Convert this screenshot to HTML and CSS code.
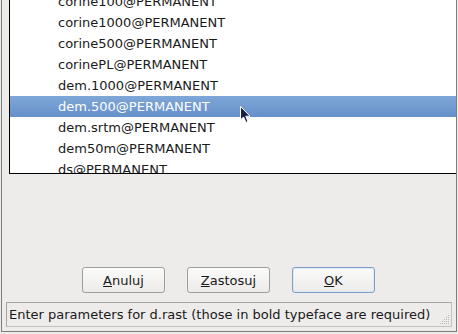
FILE: index.html
```html
<!DOCTYPE html>
<html lang="en">
<head>
    <meta charset="UTF-8">
    <title>d.rast</title>
    <link rel="stylesheet" href="styles.css">
</head>
<body>
    <div class="window">
        <div class="list-box">
            <ul class="map-list">
                <li>corine100@PERMANENT</li>
                <li>corine1000@PERMANENT</li>
                <li>corine500@PERMANENT</li>
                <li>corinePL@PERMANENT</li>
                <li>dem.1000@PERMANENT</li>
                <li class="selected">dem.500@PERMANENT</li>
                <li>dem.srtm@PERMANENT</li>
                <li>dem50m@PERMANENT</li>
                <li>ds@PERMANENT</li>
            </ul>
        </div>
        <div class="buttons">
            <button class="btn"><u>A</u>nuluj</button>
            <button class="btn"><u>Z</u>astosuj</button>
            <button class="btn default"><u>O</u>K</button>
        </div>
        <div class="statusbar">
            <span>Enter parameters for d.rast (those in bold typeface are required)</span>
            <svg class="grip" width="12" height="12" viewBox="0 0 12 12">
                <g fill="#b9b7b3">
                    <rect x="10" y="2" width="1" height="1"/>
                    <rect x="8" y="4" width="1" height="1"/><rect x="10" y="4" width="1" height="1"/>
                    <rect x="6" y="6" width="1" height="1"/><rect x="8" y="6" width="1" height="1"/><rect x="10" y="6" width="1" height="1"/>
                    <rect x="4" y="8" width="1" height="1"/><rect x="6" y="8" width="1" height="1"/><rect x="8" y="8" width="1" height="1"/><rect x="10" y="8" width="1" height="1"/>
                    <rect x="2" y="10" width="1" height="1"/><rect x="4" y="10" width="1" height="1"/><rect x="6" y="10" width="1" height="1"/><rect x="8" y="10" width="1" height="1"/><rect x="10" y="10" width="1" height="1"/>
                </g>
            </svg>
        </div>
    </div>
    <!-- mouse pointer over the list -->
    <svg class="cursor" width="14" height="20" viewBox="0 0 14 20">
        <path d="M1.5 1.5 L1.5 15 L4.5 12 L7 17.5 L9 16.5 L6.8 11.2 L11 11.2 Z" fill="#1a1f4a" stroke="#ffffff" stroke-width="1"/>
    </svg>
</body>
</html>
```
FILE: styles.css
```css
body {
    margin: 0;
    padding: 0;
    width: 458px;
    height: 334px;
    overflow: hidden;
    background-color: #edeceb;
    font-family: "DejaVu Sans", sans-serif;
    font-size: 13px;
    color: #1a1a1a;
    position: relative;
}
.window {
    margin-left: 1px;
    width: 454px;
    height: 331px;
    border: 1px solid #7d7c7a;
    border-top: none;
    display: flex;
    flex-direction: column;
}
.list-box {
    margin-left: 7px;
    height: 173px;
    border-left: 1px solid #000;
    border-bottom: 1px solid #000;
    background-color: #fff;
    overflow: hidden;
}
.map-list {
    list-style: none;
    margin: -9px 0 0 0;
    padding: 0;
}
.map-list li {
    height: 21px;
    line-height: 21px;
    padding-left: 48px;
    white-space: nowrap;
}
.map-list li.selected {
    background: linear-gradient(#7fa7d7, #6590c9);
    color: #fff;
}
.buttons {
    display: flex;
    gap: 22px;
    padding-left: 80px;
    margin-top: 93px;
}
.btn {
    width: 83px;
    height: 26px;
    padding: 0;
    font-family: "DejaVu Sans", sans-serif;
    font-size: 13px;
    color: #1a1a1a;
    background: linear-gradient(#fbfbfa, #ecebe9);
    border: 1px solid #a09e9b;
    border-radius: 3px;
}
.btn.default {
    border-color: #7d9fc8;
    box-shadow: inset 0 0 0 1px #dfe8f3;
}
.statusbar {
    margin: 9px 0 0 4px;
    width: 446px;
    height: 25px;
    border: 1px solid #c3c1bd;
    border-top-color: #a9a7a3;
    border-left-color: #a9a7a3;
    display: flex;
    align-items: center;
    justify-content: space-between;
    padding-left: 2px;
    box-sizing: border-box;
}
.grip {
    align-self: flex-end;
    margin-right: 1px;
    margin-bottom: 1px;
}
.cursor {
    position: absolute;
    left: 239px;
    top: 105px;
}
```
